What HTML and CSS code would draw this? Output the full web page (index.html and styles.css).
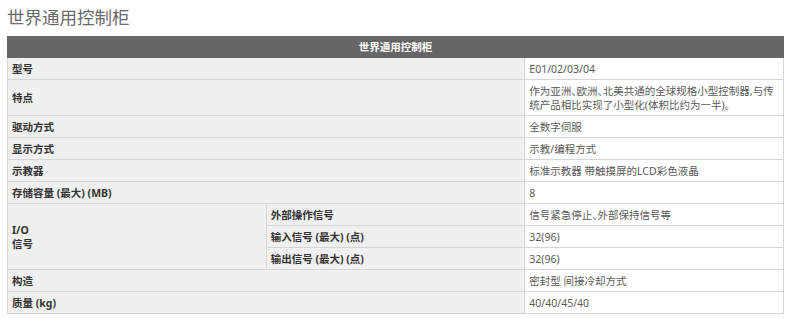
FILE: index.html
```html
<!DOCTYPE html>
<html lang="zh-CN">
<head>
<meta charset="utf-8">
<title>世界通用控制柜</title>
<link rel="stylesheet" href="styles.css">
</head>
<body>
<div class="page">
  <h1 class="title">世界通用控制柜</h1>
  <table class="spec">
    <colgroup><col><col><col></colgroup>
    <thead>
      <tr><th colspan="3" class="head">世界通用控制柜</th></tr>
    </thead>
    <tbody>
      <tr><td colspan="2" class="label">型号</td><td class="value">E01/02/03/04</td></tr>
      <tr><td colspan="2" class="label">特点</td><td class="value">作为亚洲、欧洲、北美共通的全球规格小型控制器,与传统产品相比实现了小型化(体积比约为一半)。</td></tr>
      <tr><td colspan="2" class="label">驱动方式</td><td class="value">全数字伺服</td></tr>
      <tr><td colspan="2" class="label">显示方式</td><td class="value">示教/编程方式</td></tr>
      <tr><td colspan="2" class="label">示教器</td><td class="value">标准示教器 带触摸屏的LCD彩色液晶</td></tr>
      <tr><td colspan="2" class="label">存储容量 (最大) (MB)</td><td class="value">8</td></tr>
      <tr><td rowspan="3" class="label">I/O<br>信号</td><td class="label">外部操作信号</td><td class="value">信号紧急停止、外部保持信号等</td></tr>
      <tr><td class="label">输入信号 (最大) (点)</td><td class="value">32(96)</td></tr>
      <tr><td class="label">输出信号 (最大) (点)</td><td class="value">32(96)</td></tr>
      <tr><td colspan="2" class="label">构造</td><td class="value">密封型 间接冷却方式</td></tr>
      <tr><td colspan="2" class="label">质量 (kg)</td><td class="value">40/40/45/40</td></tr>
    </tbody>
  </table>
</div>
</body>
</html>
```

FILE: styles.css
```css
html, body {
  margin: 0;
  padding: 0;
  background: #ffffff;
}

.page {
  padding: 6px 16px 0 7px;
  font-family: "Noto Sans", "Noto Sans CJK SC", sans-serif;
}

.title {
  margin: 0 0 8px 0;
  font-size: 17.5px;
  line-height: 22px;
  font-weight: normal;
  color: #6a6a6a;
  font-family: "Noto Sans CJK SC", sans-serif;
}

.spec {
  width: 777px;
  table-layout: fixed;
  border-collapse: collapse;
  border: 1px solid #d6d6d6;
  font-size: 10.5px;
  line-height: 14px;
  font-feature-settings: "halt";
}

.spec td, .spec th {
  border: 1px solid #d6d6d6;
  padding: 4px 4px 3px 4px;
  text-align: left;
  vertical-align: middle;
}

.head {
  background: #666666;
  color: #ffffff;
  font-weight: bold;
  text-align: center !important;
  padding: 3px 4px 3px 4px !important;
  border-color: #666666 !important;
}

.label {
  background: #f0f0f0;
  color: #333333;
  font-weight: bold;
}

.value {
  background: #ffffff;
  color: #5a5a5a;
}
```
